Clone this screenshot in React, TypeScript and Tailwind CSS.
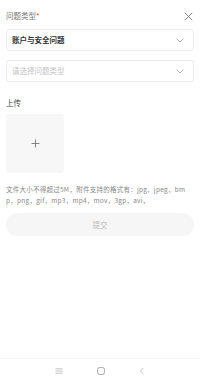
const Chevron = () => (
  <svg width="8" height="5" viewBox="0 0 8 5" fill="none" className="text-[#9a9a9a]">
    <path d="M1 1l3 3 3-3" stroke="currentColor" strokeWidth="0.8" strokeLinecap="round" strokeLinejoin="round" />
  </svg>
);

const SelectBox = ({ value, placeholder }: { value?: string; placeholder: string }) => (
  <div className="flex h-[22px] items-center justify-between rounded-[3px] border border-[#ececec] bg-white pl-[5px] pr-[9px]">
    {value ? (
      <span className="text-[7.5px] font-bold text-[#333]">{value}</span>
    ) : (
      <span className="text-[7.5px] text-[#c4c4c4]">{placeholder}</span>
    )}
    <Chevron />
  </div>
);

export default function App() {
  return (
    <div
      className="flex h-[383px] w-[200px] flex-col bg-white"
      style={{ fontFamily: '"Noto Sans CJK SC", "Noto Sans", sans-serif' }}
    >
      <div className="flex flex-1 flex-col px-[6px]">
        <div className="flex h-[30px] items-center justify-between pt-[2px]">
          <span className="text-[7.5px] text-[#777]">
            问题类型<span className="text-[#e5484d]">*</span>
          </span>
          <svg width="9" height="9" viewBox="0 0 9 9" className="mr-[1px] text-[#777]">
            <path d="M1 1l7 7M8 1L1 8" stroke="currentColor" strokeWidth="0.9" strokeLinecap="round" />
          </svg>
        </div>
        <div className="mt-[-1px]">
          <SelectBox value="账户与安全问题" placeholder="请选择问题类型" />
        </div>
        <div className="mt-[9px]">
          <SelectBox placeholder="请选择问题类型" />
        </div>
        <div className="mt-[15px] text-[7.5px] text-[#444]">上传</div>
        <div className="mt-[6px] flex h-[59px] w-[58px] items-center justify-center rounded-[3px] bg-[#f7f7f7]">
          <svg width="9" height="9" viewBox="0 0 9 9" className="text-[#777]">
            <path d="M4.5 0.5v8M0.5 4.5h8" stroke="currentColor" strokeWidth="0.9" />
          </svg>
        </div>
        <p className="mt-[11px] break-all pr-[4px] text-[6.5px] leading-[11px] tracking-[0.25px] text-[#888]">
          文件大小不得超过5M，附件支持的格式有：jpg，jpeg，bmp，png，gif，mp3，mp4，mov，3gp，avi，
        </p>
        <button className="mt-[7px] flex h-[23px] w-full items-center justify-center rounded-full bg-[#f6f6f6] text-[7.5px] text-[#bdbdbd]">
          提交
        </button>
      </div>
      <div className="flex h-[25px] items-center justify-center gap-[34px] border-t border-[#f2f2f2] pb-[1px]">
        <svg width="8" height="6" viewBox="0 0 8 6" className="text-[#aaa]">
          <path d="M0.5 0.8h7M0.5 3h7M0.5 5.2h7" stroke="currentColor" strokeWidth="0.7" />
        </svg>
        <svg width="8" height="8" viewBox="0 0 8 8" className="text-[#999]">
          <rect x="0.6" y="0.6" width="6.8" height="6.8" rx="1.8" fill="none" stroke="currentColor" strokeWidth="0.9" />
        </svg>
        <svg width="6" height="8" viewBox="0 0 6 8" className="text-[#aaa]">
          <path d="M4.5 0.8L1.5 4l3 3.2" fill="none" stroke="currentColor" strokeWidth="0.7" />
        </svg>
      </div>
    </div>
  );
}
